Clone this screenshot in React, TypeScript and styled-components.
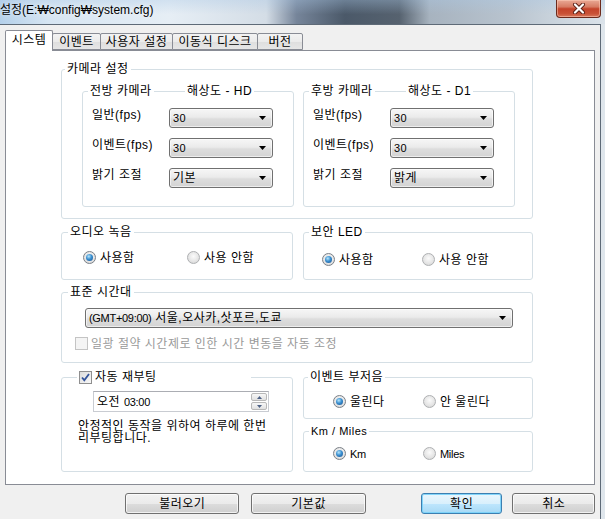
import React from 'react';
import styled, { createGlobalStyle } from 'styled-components';

const GlobalStyle = createGlobalStyle`
  html, body {
    margin: 0;
    padding: 0;
  }
  body {
    width: 605px;
    height: 519px;
    overflow: hidden;
    font-family: 'Liberation Sans', 'Noto Sans CJK KR', sans-serif;
    font-size: 12px;
    letter-spacing: 0.5px;
    color: #000;
  }
  * {
    box-sizing: border-box;
  }
`;

const Window = styled.div`
  width: 605px;
  height: 519px;
  display: flex;
  flex-direction: column;
  background:
    linear-gradient(180deg, rgba(170, 200, 230, 0.35), rgba(255, 255, 255, 0) 60%) top / 100% 24px no-repeat,
    linear-gradient(90deg, #b4d0ea 0%, #d6e5f2 8%, #e6eef5 28%, #d4dde6 44%, #76859a 49%, #4b5969 57%, #56626f 66%, #a7b3bf 71%, #b8c3ce 84%, #c8d2db 91%, #dbe3ea 100%) top / 100% 24px no-repeat,
    #dfe6ec;
`;

const TitleBar = styled.div`
  height: 24px;
  display: flex;
  justify-content: space-between;
  align-items: flex-start;
`;

const TitleText = styled.span`
  padding-top: 3px;
  line-height: 14px;
  font-size: 12px;
  letter-spacing: 0;
  color: #000;
  text-shadow: 0 0 6px rgba(255, 255, 255, 0.9);
  white-space: nowrap;
`;

const CloseButton = styled.div`
  width: 45px;
  height: 18px;
  margin-right: 4px;
  border: 1px solid #6b2a1c;
  border-top: none;
  border-radius: 0 0 4px 4px;
  background: linear-gradient(180deg, #e9a995 0%, #d77c64 40%, #c4432a 52%, #c95236 80%, #d8775c 100%);
  box-shadow: inset 0 0 0 1px rgba(255, 210, 190, 0.5);
  display: flex;
  align-items: center;
  justify-content: center;
`;

const Client = styled.div`
  flex: 1;
  width: 601px;
  background: #f0f0f0;
  border-top: 1px solid #5e6a77;
  border-right: 1px solid #5e6a77;
  padding: 5px 5px 0 5px;
  display: flex;
  flex-direction: column;
`;

const TabStrip = styled.div`
  height: 20px;
  display: flex;
  align-items: flex-end;
`;

const Tab = styled.div<{ $w: number; $active?: boolean }>`
  position: relative;
  z-index: ${p => (p.$active ? 2 : 1)};
  width: ${p => p.$w}px;
  height: ${p => (p.$active ? 21 : 17)}px;
  margin-left: ${p => (p.$active ? 0 : -1)}px;
  margin-bottom: ${p => (p.$active ? -1 : 0)}px;
  border: 1px solid #898c95;
  border-bottom: ${p => (p.$active ? 'none' : '1px solid #898c95')};
  border-radius: 2px 2px 0 0;
  background: ${p => (p.$active ? '#fff' : 'linear-gradient(180deg, #f3f3f3 0%, #ebebeb 50%, #dedede 51%, #e6e6e6 100%)')};
  display: flex;
  align-items: center;
  justify-content: center;
  font-size: 12px;
  line-height: 14px;
  padding-bottom: ${p => (p.$active ? 2 : 0)}px;
  white-space: nowrap;
`;

const TabPane = styled.div`
  width: 590px;
  height: 435px;
  background: #fff;
  border: 1px solid #898c95;
  padding: 18px 0 0 55px;
`;

const Column = styled.div`
  width: 472px;
  display: flex;
  flex-direction: column;
`;

const GroupBox = styled.div<{ $h: number; $w?: number; $mt?: number }>`
  position: relative;
  flex-shrink: 0;
  height: ${p => p.$h}px;
  width: ${p => (p.$w ? `${p.$w}px` : 'auto')};
  margin-top: ${p => p.$mt ?? 0}px;
  border: 1px solid #d5dfe5;
  border-radius: 3px;
`;

const Caption = styled.span<{ $left: number; $size?: number; $w?: number }>`
  position: absolute;
  top: -8px;
  left: ${p => p.$left}px;
  width: ${p => (p.$w ? `${p.$w}px` : 'auto')};
  height: 14px;
  padding: 0 2px;
  background: #fff;
  display: flex;
  align-items: center;
  gap: 3px;
  font-size: ${p => p.$size ?? 12}px;
  line-height: 14px;
  white-space: nowrap;
`;

const CameraBody = styled.div`
  display: flex;
  gap: 9px;
  padding: 21px 0 0 20px;
`;

const FieldList = styled.div`
  display: flex;
  flex-direction: column;
  gap: 10px;
  padding: 16px 0 0 9px;
`;

const FieldRow = styled.div`
  display: flex;
  height: 20px;
`;

const FieldLabel = styled.span`
  width: 77px;
  font-size: 12px;
  line-height: 14px;
  white-space: nowrap;
`;

const Combo = styled.div<{ $w: number }>`
  width: ${p => p.$w}px;
  height: 20px;
  border: 1px solid #707070;
  border-radius: 3px;
  background: linear-gradient(180deg, #f6f6f6 0%, #ebebeb 45%, #dddddd 55%, #d3d3d3 100%);
  box-shadow: inset 0 0 0 1px rgba(255, 255, 255, 0.6);
  display: flex;
  align-items: center;
  justify-content: space-between;
  padding: 0 6px 0 3px;
`;

const ComboText = styled.span<{ $small?: boolean }>`
  font-size: ${p => (p.$small ? 11 : 12)}px;
  line-height: 14px;
  white-space: nowrap;
`;

const Small = styled.span`
  font-size: 11px;
  letter-spacing: -0.3px;
`;

const Pair = styled.div<{ $mt: number }>`
  display: grid;
  grid-template-columns: 232px 230px;
  column-gap: 10px;
  margin-top: ${p => p.$mt}px;
  align-items: start;
`;

const Stack = styled.div`
  display: flex;
  flex-direction: column;
  gap: 12px;
`;

const RadioGroup = styled.div<{ $pt: number; $pl: number }>`
  display: flex;
  padding: ${p => p.$pt}px 0 0 ${p => p.$pl}px;
`;

const RadioItem = styled.label<{ $w: number }>`
  width: ${p => p.$w}px;
  height: 13px;
  display: flex;
  align-items: center;
  gap: 4px;
  font-size: 12px;
  line-height: 14px;
  white-space: nowrap;
`;

const RadioDot = styled.span<{ $on?: boolean }>`
  width: 13px;
  height: 13px;
  flex-shrink: 0;
  border-radius: 50%;
  border: 1px solid ${p => (p.$on ? '#7a8087' : '#aeb0b2')};
  background: radial-gradient(circle at 50% 40%, #fbfbfb 0%, #e4e4e4 60%, #cfcfcf 100%);
  display: flex;
  align-items: center;
  justify-content: center;
  &::after {
    content: '';
    width: 7px;
    height: 7px;
    border-radius: 50%;
    background: ${p => (p.$on ? 'radial-gradient(circle at 40% 35%, #b7e6fb 0%, #3a8fd0 45%, #174d8a 100%)' : 'transparent')};
  }
`;

const CheckBox = styled.span<{ $disabled?: boolean }>`
  width: 13px;
  height: 13px;
  flex-shrink: 0;
  border: 1px solid ${p => (p.$disabled ? '#c4c4c4' : '#8f8f8f')};
  background: ${p => (p.$disabled ? '#f4f4f4' : 'linear-gradient(135deg, #dcdcdc 0%, #f8f8f8 100%)')};
  display: flex;
  align-items: center;
  justify-content: center;
`;

const TzBody = styled.div`
  padding: 15px 0 0 23px;
`;

const CheckRow = styled.div<{ $disabled?: boolean }>`
  display: flex;
  align-items: center;
  gap: 3px;
  margin: 9px 0 0 -10px;
  height: 13px;
  font-size: 12px;
  line-height: 14px;
  color: ${p => (p.$disabled ? '#9a9a9a' : '#000')};
  white-space: nowrap;
`;

const RebootBody = styled.div`
  padding: 13px 0 0 31px;
`;

const TimeField = styled.div`
  width: 176px;
  height: 21px;
  border: 1px solid #c9ccd2;
  border-top-color: #abadb3;
  display: flex;
  align-items: center;
  justify-content: space-between;
  padding: 0 1px 0 3px;
  font-size: 12px;
  line-height: 14px;
  white-space: nowrap;
`;

const Spin = styled.div`
  width: 16px;
  height: 17px;
  display: flex;
  flex-direction: column;
  gap: 1px;
`;

const SpinButton = styled.div`
  flex: 1;
  border: 1px solid #b8b8b8;
  border-radius: 2px;
  background: linear-gradient(180deg, #f7f7f7, #e1e1e1);
  display: flex;
  align-items: center;
  justify-content: center;
`;

const Note = styled.p`
  margin: 8px 0 0 -15px;
  font-size: 12px;
  line-height: 12px;
`;

const ButtonRow = styled.div`
  display: flex;
  margin-top: 8px;
  padding-left: 120px;
  gap: 12px;
`;

const Button = styled.div<{ $w: number; $primary?: boolean; $push?: number }>`
  width: ${p => p.$w}px;
  height: 21px;
  margin-left: ${p => p.$push ?? 0}px;
  border: 1px solid ${p => (p.$primary ? '#3c7fb1' : '#707070')};
  border-radius: 3px;
  background: ${p =>
    p.$primary
      ? 'linear-gradient(180deg, #eaf6fd 0%, #d9f0fc 50%, #bee6fd 51%, #a7d9f5 100%)'
      : 'linear-gradient(180deg, #f2f2f2 0%, #ebebeb 50%, #dddddd 51%, #cfcfcf 100%)'};
  box-shadow: inset 0 0 0 1px ${p => (p.$primary ? 'rgba(120, 210, 250, 0.9)' : 'rgba(255, 255, 255, 0.7)')};
  display: flex;
  align-items: center;
  justify-content: center;
  font-size: 12px;
  line-height: 14px;
`;

const Arrow = () => (
  <svg width="7" height="4" viewBox="0 0 7 4">
    <path d="M0 0h7L3.5 4z" fill="#000" />
  </svg>
);

const Check = ({ color }: { color: string }) => (
  <svg width="9" height="9" viewBox="0 0 9 9">
    <path d="M1 4.5l2.3 2.7L8 1" fill="none" stroke={color} strokeWidth="1.8" />
  </svg>
);

const SpinArrow = ({ up }: { up?: boolean }) => (
  <svg width="5" height="3" viewBox="0 0 5 3">
    <path d={up ? 'M0 3h5L2.5 0z' : 'M0 0h5L2.5 3z'} fill="#4d6185" />
  </svg>
);

const CloseX = () => (
  <svg width="14" height="11" viewBox="0 0 14 11">
    <path d="M3 1.5l8 8M11 1.5l-8 8" stroke="#5a2016" strokeWidth="4" strokeLinecap="round" />
    <path d="M3 1.5l8 8M11 1.5l-8 8" stroke="#fff" strokeWidth="2.2" strokeLinecap="round" />
  </svg>
);

type CameraProps = { title: string; resolution: string; brightness: string };

const CameraBox = ({ title, resolution, brightness }: CameraProps) => (
  <GroupBox $w={212} $h={116}>
    <Caption $left={5}>{title}</Caption>
    <Caption $left={102}>해상도 - {resolution}</Caption>
    <FieldList>
      <FieldRow>
        <FieldLabel>일반(fps)</FieldLabel>
        <Combo $w={104}>
          <ComboText $small>30</ComboText>
          <Arrow />
        </Combo>
      </FieldRow>
      <FieldRow>
        <FieldLabel>이벤트(fps)</FieldLabel>
        <Combo $w={104}>
          <ComboText $small>30</ComboText>
          <Arrow />
        </Combo>
      </FieldRow>
      <FieldRow>
        <FieldLabel>밝기 조절</FieldLabel>
        <Combo $w={104}>
          <ComboText>{brightness}</ComboText>
          <Arrow />
        </Combo>
      </FieldRow>
    </FieldList>
  </GroupBox>
);

const tabs = [
  { label: '시스템', w: 48 },
  { label: '이벤트', w: 49 },
  { label: '사용자 설정', w: 73 },
  { label: '이동식 디스크', w: 86 },
  { label: '버전', w: 46 },
];

export default function App() {
  return (
    <>
      <GlobalStyle />
      <Window>
        <TitleBar>
          <TitleText>설정(E:₩config₩system.cfg)</TitleText>
          <CloseButton>
            <CloseX />
          </CloseButton>
        </TitleBar>
        <Client>
          <TabStrip>
            {tabs.map((t, i) => (
              <Tab key={t.label} $w={t.w} $active={i === 0}>
                {t.label}
              </Tab>
            ))}
          </TabStrip>
          <TabPane>
            <Column>
              <GroupBox $h={150}>
                <Caption $left={3}>카메라 설정</Caption>
                <CameraBody>
                  <CameraBox title="전방 카메라" resolution="HD" brightness="기본" />
                  <CameraBox title="후방 카메라" resolution="D1" brightness="밝게" />
                </CameraBody>
              </GroupBox>

              <Pair $mt={13}>
                <GroupBox $h={48}>
                  <Caption $left={6}>오디오 녹음</Caption>
                  <RadioGroup $pt={18} $pl={21}>
                    <RadioItem $w={104}>
                      <RadioDot $on />
                      사용함
                    </RadioItem>
                    <RadioItem $w={100}>
                      <RadioDot />
                      사용 안함
                    </RadioItem>
                  </RadioGroup>
                </GroupBox>
                <GroupBox $h={48}>
                  <Caption $left={5}>보안 LED</Caption>
                  <RadioGroup $pt={20} $pl={18}>
                    <RadioItem $w={100}>
                      <RadioDot $on />
                      사용함
                    </RadioItem>
                    <RadioItem $w={100}>
                      <RadioDot />
                      사용 안함
                    </RadioItem>
                  </RadioGroup>
                </GroupBox>
              </Pair>

              <GroupBox $h={71} $mt={12}>
                <Caption $left={6}>표준 시간대</Caption>
                <TzBody>
                  <Combo $w={428}>
                    <ComboText>
                      <Small>(GMT+09:00)</Small> 서울,오사카,삿포르,도쿄
                    </ComboText>
                    <Arrow />
                  </Combo>
                  <CheckRow $disabled>
                    <CheckBox $disabled />
                    일광 절약 시간제로 인한 시간 변동을 자동 조정
                  </CheckRow>
                </TzBody>
              </GroupBox>

              <Pair $mt={14}>
                <GroupBox $h={95}>
                  <Caption $left={15} $w={174}>
                    <CheckBox>
                      <Check color="#33549b" />
                    </CheckBox>
                    자동 재부팅
                  </Caption>
                  <RebootBody>
                    <TimeField>
                      <span>
                        오전 <Small>03:00</Small>
                      </span>
                      <Spin>
                        <SpinButton>
                          <SpinArrow up />
                        </SpinButton>
                        <SpinButton>
                          <SpinArrow />
                        </SpinButton>
                      </Spin>
                    </TimeField>
                    <Note>
                      안정적인 동작을 위하여 하루에 한번
                      <br />
                      리부팅합니다.
                    </Note>
                  </RebootBody>
                </GroupBox>
                <Stack>
                  <GroupBox $h={42}>
                    <Caption $left={4}>이벤트 부저음</Caption>
                    <RadioGroup $pt={17} $pl={29}>
                      <RadioItem $w={90}>
                        <RadioDot $on />
                        울린다
                      </RadioItem>
                      <RadioItem $w={90}>
                        <RadioDot />
                        안 울린다
                      </RadioItem>
                    </RadioGroup>
                  </GroupBox>
                  <GroupBox $h={41}>
                    <Caption $left={5} $size={11}>
                      Km / Miles
                    </Caption>
                    <RadioGroup $pt={15} $pl={29}>
                      <RadioItem $w={90}>
                        <RadioDot $on />
                        <Small>Km</Small>
                      </RadioItem>
                      <RadioItem $w={90}>
                        <RadioDot />
                        <Small>Miles</Small>
                      </RadioItem>
                    </RadioGroup>
                  </GroupBox>
                </Stack>
              </Pair>
            </Column>
          </TabPane>
          <ButtonRow>
            <Button $w={115}>불러오기</Button>
            <Button $w={115}>기본값</Button>
            <Button $w={82} $primary $push={43}>
              확인
            </Button>
            <Button $w={83} $push={-2}>
              취소
            </Button>
          </ButtonRow>
        </Client>
      </Window>
    </>
  );
}
